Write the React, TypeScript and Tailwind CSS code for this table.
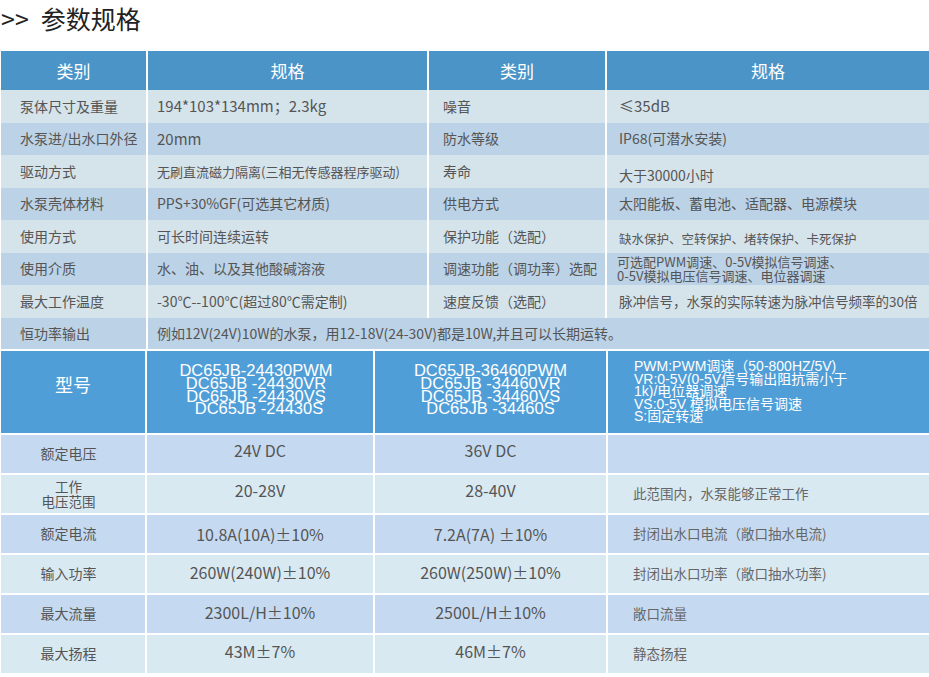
import React from 'react';

const specRows = [
  { label: '泵体尺寸及重量', value: '194*103*134mm；2.3kg', valueCls: 'text-[15px]', label2: '噪音', value2: '≤35dB', value2Cls: 'text-[15px]' },
  { label: '水泵进/出水口外径', value: '20mm', valueCls: 'text-[15px]', label2: '防水等级', value2: 'IP68(可潜水安装)', value2Cls: 'text-[14px]' },
  { label: '驱动方式', value: '无刷直流磁力隔离(三相无传感器程序驱动)', valueCls: 'text-[13px]', label2: '寿命', value2: '大于30000小时', value2Cls: 'text-[14px] pt-[8px]' },
  { label: '水泵壳体材料', value: 'PPS+30%GF(可选其它材质)', valueCls: 'text-[14px]', label2: '供电方式', value2: '太阳能板、蓄电池、适配器、电源模块', value2Cls: 'text-[14px]' },
  { label: '使用方式', value: '可长时间连续运转', valueCls: 'text-[14px]', label2: '保护功能（选配）', value2: '缺水保护、空转保护、堵转保护、卡死保护', value2Cls: 'text-[12.5px] pt-[6px]' },
  { label: '使用介质', value: '水、油、以及其他酸碱溶液', valueCls: 'text-[14px]', label2: '调速功能（调功率）选配', value2: '', value2Cls: '' },
  { label: '最大工作温度', value: '-30℃--100℃(超过80℃需定制)', valueCls: 'text-[14px]', label2: '速度反馈（选配）', value2: '脉冲信号，水泵的实际转速为脉冲信号频率的30倍', value2Cls: 'text-[13.5px]' },
];

const perfRows = [
  { label: ['额定电压'], a: '24V DC', b: '36V DC', note: '', shift: 'pb-[8px]' },
  { label: ['工作', '电压范围'], a: '20-28V', b: '28-40V', note: '此范围内，水泵能够正常工作', shift: 'pb-[8px]' },
  { label: ['额定电流'], a: '10.8A(10A)±10%', b: '7.2A(7A) ±10%', note: '封闭出水口电流（敞口抽水电流)', shift: '' },
  { label: ['输入功率'], a: '260W(240W)±10%', b: '260W(250W)±10%', note: '封闭出水口功率（敞口抽水功率)', shift: 'pb-[4px]' },
  { label: ['最大流量'], a: '2300L/H±10%', b: '2500L/H±10%', note: '敞口流量', shift: 'pb-[4px]' },
  { label: ['最大扬程'], a: '43M±7%', b: '46M±7%', note: '静态扬程', shift: 'pb-[6px]' },
];

export default function App() {
  return (
    <div className="w-[929px] h-[677px] overflow-hidden bg-white font-['Noto_Sans_CJK_SC','Noto_Sans',sans-serif] text-[#555]">
      {/* Title */}
      <div className="h-[51px] flex items-start pl-[1px] text-[25px] leading-[37px] text-[#222]">
        <span>&gt;&gt;</span>
        <span className="ml-[12px]">参数规格</span>
      </div>

      {/* Spec table */}
      <div className="ml-[1px] grid grid-cols-[145px_279px_176px_1fr] gap-x-[2px]">
        <div className="h-[39px] bg-[#4a94c8] text-white text-[17px] flex items-center justify-center">类别</div>
        <div className="h-[39px] bg-[#4a94c8] text-white text-[17px] flex items-center justify-center">规格</div>
        <div className="h-[39px] bg-[#4a94c8] text-white text-[17px] flex items-center justify-center">类别</div>
        <div className="h-[39px] bg-[#4a94c8] text-white text-[17px] flex items-center justify-center">规格</div>

        {specRows.map((r, i) => {
          const bg = i % 2 === 0 ? 'bg-[#d5e3eb]' : 'bg-[#bcd2e6]';
          return (
            <React.Fragment key={r.label}>
              <div className={`h-[32.5px] ${bg} flex items-center pl-[19px] text-[14px]`}>{r.label}</div>
              <div className={`h-[32.5px] ${bg} flex items-center pl-[9px] ${r.valueCls}`}>{r.value}</div>
              <div className={`h-[32.5px] ${bg} flex items-center pl-[14px] text-[14px]`}>{r.label2}</div>
              {r.value2 ? (
                <div className={`h-[32.5px] ${bg} flex items-center pl-[12px] ${r.value2Cls}`}>{r.value2}</div>
              ) : (
                <div className={`h-[32.5px] ${bg} flex flex-col justify-center pl-[10px] text-[13px] leading-[14px]`}>
                  <span>可选配PWM调速、0-5V模拟信号调速、</span>
                  <span>0-5V模拟电压信号调速、电位器调速</span>
                </div>
              )}
            </React.Fragment>
          );
        })}

        <div className="h-[31px] bg-[#bcd2e6] flex items-center pl-[19px] text-[14px]">恒功率输出</div>
        <div className="col-span-3 h-[31px] bg-[#bcd2e6] flex items-center pl-[9px] text-[14px]">
          例如12V(24V)10W的水泵，用12-18V(24-30V)都是10W,并且可以长期运转。
        </div>
      </div>

      {/* Model / performance table */}
      <div className="ml-[1px] mt-[2px] grid grid-cols-[144px_226px_231px_1fr] gap-[2px]">
        <div className="h-[82px] bg-[#509ed7] text-white text-[18px] flex items-center justify-center pb-[14px]">型号</div>
        <div className="h-[82px] bg-[#509ed7] text-white font-['Liberation_Sans',sans-serif] text-[16.5px] leading-[12.7px] flex flex-col items-center justify-center pb-[4px] pr-[8px]">
          <span>DC65JB-24430PWM</span>
          <span>DC65JB -24430VR</span>
          <span>DC65JB -24430VS</span>
          <span className="pl-[6px]">DC65JB -24430S</span>
        </div>
        <div className="h-[82px] bg-[#509ed7] text-white font-['Liberation_Sans',sans-serif] text-[16.5px] leading-[12.7px] flex flex-col items-center justify-center pb-[4px]">
          <span>DC65JB-36460PWM</span>
          <span>DC65JB -34460VR</span>
          <span>DC65JB -34460VS</span>
          <span>DC65JB -34460S</span>
        </div>
        <div className="h-[82px] bg-[#509ed7] text-white font-['Liberation_Sans','Noto_Sans_CJK_SC',sans-serif] text-[14px] leading-[12.6px] flex flex-col justify-center pl-[26px]">
          <span>PWM:PWM调速（50-800HZ/5V)</span>
          <span>VR:0-5V(0-5V信号输出阻抗需小于</span>
          <span>1k)/电位器调速</span>
          <span>VS:0-5V 模拟电压信号调速</span>
          <span>S:固定转速</span>
        </div>

        {perfRows.map((r, i) => {
          const bg = i % 2 === 0 ? 'bg-[#c5daf0]' : 'bg-[#d9e9f2]';
          return (
            <React.Fragment key={r.a}>
              <div className={`h-[38px] ${bg} flex flex-col items-center justify-center pr-[9px] ${r.label.length > 1 ? 'text-[13.5px] leading-[15px]' : 'text-[14px]'}`}>
                {r.label.map((l) => (
                  <span key={l}>{l}</span>
                ))}
              </div>
              <div className={`h-[38px] ${bg} flex items-center justify-center text-[16px] ${r.shift}`}>{r.a}</div>
              <div className={`h-[38px] ${bg} flex items-center justify-center text-[16px] ${r.shift}`}>{r.b}</div>
              <div className={`h-[38px] ${bg} flex items-center pl-[25px] text-[13.5px] text-[#666]`}>{r.note}</div>
            </React.Fragment>
          );
        })}
      </div>
    </div>
  );
}
